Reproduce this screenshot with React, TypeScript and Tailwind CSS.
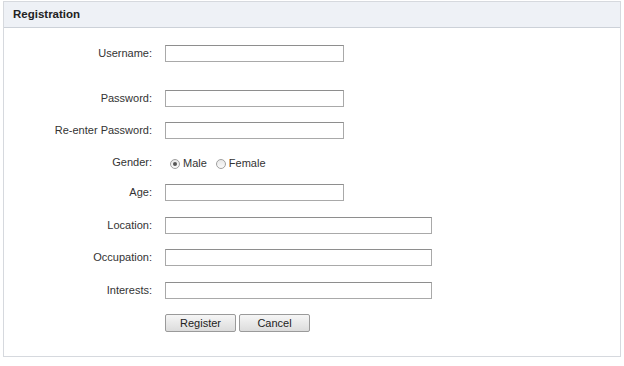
const font = { fontFamily: '"Liberation Sans", Arial, sans-serif' };

function Row({ label, mt, children }: { label: string; mt: string; children: React.ReactNode }) {
  return (
    <div className={`flex items-center h-[17px] ${mt}`}>
      <div className="w-[148px] text-right text-[11px] text-[#333]">{label}</div>
      <div className="ml-[13px] flex items-center">{children}</div>
    </div>
  );
}

function Field({ wide }: { wide?: boolean }) {
  return (
    <input
      type="text"
      className={`${wide ? "w-[267px]" : "w-[179px]"} h-[17px] border border-[#a9a9a9] border-t-[#8e8e8e] bg-white outline-none`}
    />
  );
}

function Radio({ checked }: { checked?: boolean }) {
  return (
    <span className="w-[10px] h-[10px] rounded-full border border-[#a0a0a0] bg-gradient-to-b from-[#e8e8e8] to-[#fafafa] flex items-center justify-center">
      {checked && <span className="w-[4px] h-[4px] rounded-full bg-[#555]" />}
    </span>
  );
}

function Btn({ children }: { children: React.ReactNode }) {
  return (
    <button className="h-[18px] w-[71px] border border-[#9a9a9a] rounded-[2px] bg-gradient-to-b from-[#f6f6f6] to-[#dcdcdc] text-[11px] text-[#222] leading-none">
      {children}
    </button>
  );
}

export default function App() {
  return (
    <div className="w-[624px] h-[366px] bg-white pt-[1px] pl-[3px]" style={font}>
      <div className="w-[618px] h-[356px] border border-[#d6d9de]">
        <div className="h-[26px] bg-[#eef1f6] border-b border-[#ccd1d8] flex items-center pl-[9px]">
          <span className="text-[11.5px] font-bold text-[#222]">Registration</span>
        </div>
        <div className="pt-[17px]">
          <Row label="Username:" mt="mt-0"><Field /></Row>
          <Row label="Password:" mt="mt-[28px]"><Field /></Row>
          <Row label="Re-enter Password:" mt="mt-[15px]"><Field /></Row>
          <Row label="Gender:" mt="mt-[15px]">
            <div className="flex items-center text-[11px] text-[#333] pt-[2px]">
              <span className="ml-[5px]"><Radio checked /></span>
              <span className="ml-[3px]">Male</span>
              <span className="ml-[9px]"><Radio /></span>
              <span className="ml-[3px]">Female</span>
            </div>
          </Row>
          <Row label="Age:" mt="mt-[13px]"><Field /></Row>
          <Row label="Location:" mt="mt-[16px]"><Field wide /></Row>
          <Row label="Occupation:" mt="mt-[15px]"><Field wide /></Row>
          <Row label="Interests:" mt="mt-[16px]"><Field wide /></Row>
          <div className="flex mt-[15px] ml-[161px] gap-[3px]">
            <Btn>Register</Btn>
            <Btn>Cancel</Btn>
          </div>
        </div>
      </div>
    </div>
  );
}
